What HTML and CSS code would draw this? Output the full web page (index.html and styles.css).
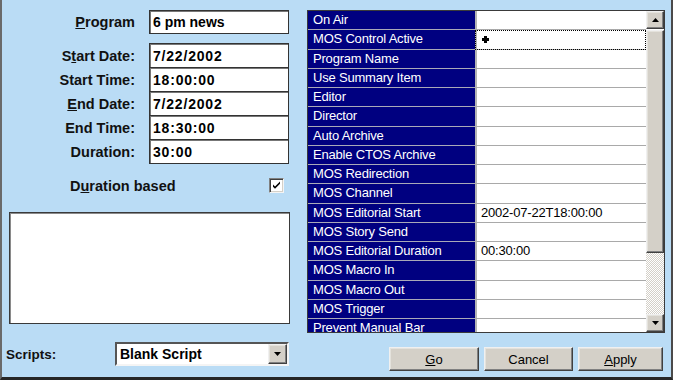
FILE: index.html
```html
<!DOCTYPE html>
<html>
<head>
<meta charset="utf-8">
<link rel="stylesheet" href="styles.css">
</head>
<body>
<div class="window">
  <div class="left">
    <div class="row prog">
      <span class="lbl"><u>P</u>rogram</span>
      <div class="field">6 pm news</div>
    </div>
    <div class="stack">
      <div class="row srow"><span class="lbl">S<u>t</u>art Date:</span><div class="field num">7/22/2002</div></div>
      <div class="row srow"><span class="lbl">Start Time:</span><div class="field num">18:00:00</div></div>
      <div class="row srow"><span class="lbl"><u>E</u>nd Date:</span><div class="field num">7/22/2002</div></div>
      <div class="row srow"><span class="lbl">End Time:</span><div class="field num">18:30:00</div></div>
      <div class="row srow"><span class="lbl">Duration:</span><div class="field num">30:00</div></div>
    </div>
    <div class="check-row">
      <span class="clbl">D<u>u</u>ration based</span>
      <span class="checkbox"><svg width="9" height="9" viewBox="0 0 9 9"><path d="M1 3.5l2 2 5-5v2.2l-5 5-2-2z" fill="#000"/></svg></span>
    </div>
    <div class="memo"></div>
  </div>

  <div class="right">
    <div class="pgrid">
      <div class="ptable">
        <div class="prow"><div class="pname">On Air</div><div class="pval"></div></div>
        <div class="prow"><div class="pname">MOS Control Active</div><div class="pval focus"><svg class="plus" width="7" height="7" viewBox="0 0 7 7"><path d="M2 0h3v2h2v3h-2v2h-3v-2h-2v-3h2z" fill="#000"/></svg></div></div>
        <div class="prow"><div class="pname">Program Name</div><div class="pval"></div></div>
        <div class="prow"><div class="pname">Use Summary Item</div><div class="pval"></div></div>
        <div class="prow"><div class="pname">Editor</div><div class="pval"></div></div>
        <div class="prow"><div class="pname">Director</div><div class="pval"></div></div>
        <div class="prow"><div class="pname">Auto Archive</div><div class="pval"></div></div>
        <div class="prow"><div class="pname">Enable CTOS Archive</div><div class="pval"></div></div>
        <div class="prow"><div class="pname">MOS Redirection</div><div class="pval"></div></div>
        <div class="prow"><div class="pname">MOS Channel</div><div class="pval"></div></div>
        <div class="prow"><div class="pname">MOS Editorial Start</div><div class="pval">2002-07-22T18:00:00</div></div>
        <div class="prow"><div class="pname">MOS Story Send</div><div class="pval"></div></div>
        <div class="prow"><div class="pname">MOS Editorial Duration</div><div class="pval">00:30:00</div></div>
        <div class="prow"><div class="pname">MOS Macro In</div><div class="pval"></div></div>
        <div class="prow"><div class="pname">MOS Macro Out</div><div class="pval"></div></div>
        <div class="prow"><div class="pname">MOS Trigger</div><div class="pval"></div></div>
        <div class="prow"><div class="pname">Prevent Manual Bar</div><div class="pval"></div></div>
      </div>
      <div class="scrollbar">
        <div class="sbtn"><svg width="7" height="4" viewBox="0 0 7 4"><path d="M3.5 0L7 4H0z" fill="#000"/></svg></div>
        <div class="thumb"></div>
        <div class="track"></div>
        <div class="sbtn"><svg width="7" height="4" viewBox="0 0 7 4"><path d="M0 0h7L3.5 4z" fill="#000"/></svg></div>
      </div>
    </div>
  </div>

  <div class="scripts">
    <span class="slbl">Scripts:</span>
    <div class="combo">
      <span class="ctext">Blank Script</span>
      <span class="cbtn"><svg width="7" height="4" viewBox="0 0 7 4"><path d="M0 0h7L3.5 4z" fill="#000"/></svg></span>
    </div>
  </div>

  <div class="buttons">
    <button class="btn go"><u>G</u>o</button>
    <button class="btn cancel">Cancel</button>
    <button class="btn apply"><u>A</u>pply</button>
  </div>
</div>
</body>
</html>
```

FILE: styles.css
```css
* { box-sizing: border-box; }
html, body { margin: 0; padding: 0; }
body { width: 673px; height: 380px; overflow: hidden; background: #badcf5; }

.window {
  width: 673px;
  height: 380px;
  background: #badcf5;
  border-left: 2px solid #6a6a6a;
  border-right: 2px solid #4a4a4a;
  border-bottom: 3px solid #262626;
  display: grid;
  grid-template-columns: 305px 1fr;
  grid-template-rows: 332px 1fr;
  font-family: "Liberation Sans", Arial, sans-serif;
  color: #000;
}

/* left form */
.left { padding-top: 10px; display: flex; flex-direction: column; }
.row { display: flex; align-items: center; height: 24px; }
.lbl {
  width: 133px;
  text-align: right;
  font-weight: bold;
  font-size: 14.5px;
  color: #111;
}
.field {
  margin-left: 14px;
  width: 140px;
  height: 100%;
  background: #fff;
  border: 1px solid #333;
  box-shadow: inset 1px 1px 0 #777;
  font-weight: bold;
  font-size: 14px;
  padding-left: 3px;
  display: flex;
  align-items: center;
}
.field.num { letter-spacing: 0.8px; }
.stack { margin-top: 9px; display: flex; flex-direction: column; }
.srow { height: 25px; }
.srow + .srow { margin-top: -1px; }

.check-row {
  margin-top: 14px;
  width: 282px;
  height: 15px;
  padding-left: 68px;
  display: flex;
  align-items: center;
  justify-content: space-between;
}
.clbl { font-weight: bold; font-size: 14.5px; color: #111; }
.checkbox {
  width: 15px;
  height: 15px;
  background: #fff;
  border: 1px solid;
  border-color: #808080 #f4f4f4 #f4f4f4 #808080;
  box-shadow: inset 1px 1px 0 #404040, inset -1px -1px 0 #d4d0c8;
  display: flex;
  align-items: center;
  justify-content: center;
}
.memo {
  margin-top: 19px;
  margin-left: 7px;
  width: 281px;
  height: 112px;
  background: #fff;
  border: 1px solid #3a3a3a;
  box-shadow: inset 1px 1px 0 #8a8a8a;
}

/* property grid */
.right { padding-top: 10px; }
.pgrid {
  width: 358px;
  height: 323px;
  border: 1px solid #3a3a3a;
  display: flex;
  background: #fff;
}
.ptable { flex: 1; overflow: hidden; display: flex; flex-direction: column; }
.prow { display: flex; height: 19.25px; flex: none; }
.pname {
  width: 167px;
  background: #000080;
  color: #fff;
  border-bottom: 1px solid #a9a9b8;
  font-family: "Liberation Sans", sans-serif;
  font-size: 13px;
  letter-spacing: -0.2px;
  padding-left: 5px;
  line-height: 18px;
  white-space: nowrap;
  overflow: hidden;
}
.pval {
  flex: 1;
  background: #fff;
  border-left: 2px solid #b4b4b4;
  border-bottom: 1px solid #a9a9a9;
  font-family: "Liberation Sans", sans-serif;
  font-size: 13px;
  letter-spacing: -0.2px;
  padding-left: 4px;
  line-height: 18px;
  white-space: nowrap;
  display: flex;
  align-items: center;
}
.pval.focus { outline: 1px dotted #000; outline-offset: -1px; }
.plus { margin-left: 1px; }

.scrollbar { width: 18px; display: flex; flex-direction: column; }
.sbtn, .thumb, .cbtn, .btn {
  background: #d4d0c8;
  border: 1px solid;
  border-color: #f0f0f0 #404040 #404040 #f0f0f0;
  box-shadow: inset -1px -1px 0 #808080, inset 1px 1px 0 #e4e2dc;
}
.sbtn { height: 18px; display: flex; align-items: center; justify-content: center; flex: none; }
.thumb { height: 223px; margin-top: 1px; flex: none; }
.track {
  flex: 1;
  background: repeating-conic-gradient(#ffffff 0 25%, #d4d0c8 0 50%) 0 0 / 2px 2px;
}

/* bottom row */
.scripts { padding-top: 10px; display: flex; align-items: flex-start; }
.slbl {
  width: 113px;
  padding-left: 4px;
  height: 24px;
  display: flex;
  align-items: center;
  font-weight: bold;
  font-size: 13.5px;
  color: #111;
}
.combo {
  width: 174px;
  height: 24px;
  background: #fff;
  border: 2px solid;
  border-color: #555 #f4f4f4 #f4f4f4 #555;
  display: flex;
  align-items: center;
  justify-content: space-between;
}
.ctext { font-weight: bold; font-size: 14px; padding-left: 3px; }
.cbtn { width: 19px; height: 20px; display: flex; align-items: center; justify-content: center; }

.buttons {
  padding-top: 15px;
  padding-right: 8px;
  display: flex;
  justify-content: flex-end;
  align-items: flex-start;
  gap: 5px;
}
.btn {
  height: 24px;
  font-family: "Liberation Sans", Arial, sans-serif;
  font-size: 13px;
  color: #000;
  padding: 0;
}
.go { width: 90px; }
.cancel { width: 89px; }
.apply { width: 85px; }
```
